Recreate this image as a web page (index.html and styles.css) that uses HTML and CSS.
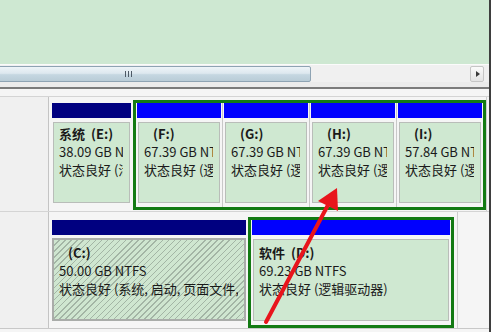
FILE: index.html
```html
<!DOCTYPE html>
<html lang="zh-CN">
<head>
	<meta charset="UTF-8">
	<title>磁盘管理</title>
	<link rel="stylesheet" href="styles.css">
</head>
<body>
	<div class="win">
		<div class="main">
			<div class="top"></div>
			<div class="hscroll">
				<div class="track">
					<div class="thumb"><i class="grip"></i></div>
				</div>
				<div class="btn"></div>
			</div>
			<div class="sep"></div>
			<div class="disks">
				<!-- 磁盘 1 -->
				<div class="row row1">
					<div class="label"></div>
					<div class="panel">
						<div class="part navy e">
							<div class="hd"></div>
							<div class="bd">
								<p class="name">系统<span>(E:)</span></p>
								<p>38.09 GB NTFS</p>
								<p>状态良好 (活动, 主分区)</p>
							</div>
						</div>
						<div class="frame">
							<div class="part blue">
								<div class="hd"></div>
								<div class="bd">
									<p class="name"><span class="solo">(F:)</span></p>
									<p>67.39 GB NTFS</p>
									<p>状态良好 (逻辑驱动器)</p>
								</div>
							</div>
							<div class="part blue">
								<div class="hd"></div>
								<div class="bd">
									<p class="name"><span class="solo">(G:)</span></p>
									<p>67.39 GB NTFS</p>
									<p>状态良好 (逻辑驱动器)</p>
								</div>
							</div>
							<div class="part blue">
								<div class="hd"></div>
								<div class="bd">
									<p class="name"><span class="solo">(H:)</span></p>
									<p>67.39 GB NTFS</p>
									<p>状态良好 (逻辑驱动器)</p>
								</div>
							</div>
							<div class="part blue">
								<div class="hd"></div>
								<div class="bd">
									<p class="name"><span class="solo">(I:)</span></p>
									<p>57.84 GB NTFS</p>
									<p>状态良好 (逻辑驱动器)</p>
								</div>
							</div>
						</div>
					</div>
				</div>
				<!-- 磁盘 0 -->
				<div class="row row2">
					<div class="label"></div>
					<div class="panel">
						<div class="part navy c">
							<div class="hd"></div>
							<div class="bd hatch">
								<p class="name"><span class="solo">(C:)</span></p>
								<p>50.00 GB NTFS</p>
								<p>状态良好 (系统, 启动, 页面文件, 活动, 故障转储, 主分区)</p>
							</div>
						</div>
						<div class="frame">
							<div class="part blue">
								<div class="hd"></div>
								<div class="bd">
									<p class="name">软件<span>(D:)</span></p>
									<p>69.23 GB NTFS</p>
									<p>状态良好 (逻辑驱动器)</p>
								</div>
							</div>
						</div>
					</div>
				</div>
			</div>
		</div>
		<div class="edge"></div>
	</div>
	<svg class="mark" width="494" height="332" viewBox="0 0 494 332">
		<line x1="266" y1="322" x2="328" y2="205" stroke="#e8151c" stroke-width="4" stroke-linecap="round"/>
		<polygon points="337,188 318,201 338,211" fill="#e8151c"/>
	</svg>
</body>
</html>
```

FILE: styles.css
```css
*{
	margin: 0;
	padding: 0;
	box-sizing: border-box;
}
body{
	position: relative;
	width: 494px;
	height: 332px;
	overflow: hidden;
	background: #fff;
	font-family: "Noto Sans CJK SC", "Noto Sans", sans-serif;
	font-size: 13px;
	color: #1a1a1a;
}
.win{
	display: flex;
	height: 332px;
}
.main{
	display: flex;
	flex-direction: column;
	width: 489px;
	flex-shrink: 0;
}
.edge{
	width: 2px;
	background: #3e3e3e;
}
.top{
	height: 64px;
	background: #cee8d2;
}

/* 滚动条 */
.hscroll{
	display: flex;
	align-items: center;
	height: 18px;
	padding-right: 5px;
	background: #f0f0f0;
	border-top: 1px solid #fbfbfb;
	overflow: hidden;
}
.track{
	flex: 1;
	height: 16px;
}
.thumb{
	display: flex;
	align-items: center;
	justify-content: center;
	margin-left: -54px;
	width: 365px;
	height: 16px;
	border: 1px solid #8ea3b3;
	border-radius: 2px;
	background: linear-gradient(#eef4f8, #dde8ef 45%, #c5d7e1 55%, #b9ccd7);
}
.grip{
	width: 7px;
	height: 6px;
	background: repeating-linear-gradient(90deg, #4e5a66 0 1px, transparent 1px 3px);
}
.btn{
	position: relative;
	width: 14px;
	height: 16px;
	border: 1px solid #c6c6c6;
	border-radius: 2px;
	background: linear-gradient(#fbfbfb, #e4e4e4);
}
.btn::after{
	content: "";
	position: absolute;
	left: 5px;
	top: 4px;
	border-left: 4px solid #3a3a3a;
	border-top: 3.5px solid transparent;
	border-bottom: 3.5px solid transparent;
}
.sep{
	height: 7px;
	background: #ebebeb;
	border-bottom: 2px solid #7b7b7b;
}

/* 磁盘 */
.disks{
	flex: 1;
	padding-top: 7px;
	background: #f5f5f5;
}
.row{
	display: flex;
	border-top: 1px solid #d4d4d4;
}
.row1{
	height: 115px;
}
.row2{
	height: 118px;
	border-bottom: 1px solid #c8c8c8;
}
.label{
	width: 49px;
	flex-shrink: 0;
	background: #f0f0f0;
	border-right: 1px solid #c4c4c4;
}
.panel{
	display: flex;
	flex-shrink: 0;
	padding: 3px 0 1px 2px;
	border-right: 1px solid #cdcdcd;
}
.row1 .panel{
	width: 438px;
}
.row2 .panel{
	width: 409px;
	padding: 5px 3px 0 2px;
}
.part{
	display: flex;
	flex-direction: column;
	min-width: 0;
}
.panel > .part{
	flex-shrink: 0;
	margin: 3px 1px 3px 0;
}
.e{
	width: 81px;
}
.c{
	width: 196px;
}
.frame{
	flex: 1 1 0;
	min-width: 0;
	display: flex;
	border: 3px solid #137a13;
}
.frame .part{
	flex: 1 1 0;
}
.frame .part + .part{
	border-left: 1px solid #c8c8c8;
}
.hd{
	height: 15px;
	margin: 0 1px;
}
.navy .hd{
	background: #000080;
}
.blue .hd{
	background: #0000fe;
}
.bd{
	flex: 1;
	min-width: 0;
	margin: 4px 2px;
	padding: 2px 6px 0 5px;
	border: 1px solid #b9bdb9;
	background: #cfe8d1;
}
.row2 .bd{
	padding-top: 4px;
}
.bd p{
	overflow: hidden;
	white-space: nowrap;
	line-height: 18px;
}
.name{
	font-weight: bold;
}
.name span{
	margin-left: 6px;
}
.name .solo{
	margin-left: 9px;
}
.hatch{
	margin: 3px 1px 4px;
	border: 2px solid #a9aca9;
	background: repeating-linear-gradient(135deg, #cfe6d0 0 3.3px, #a3b5a5 3.3px 4.3px);
}

/* 红色箭头 */
.mark{
	position: absolute;
	left: 0;
	top: 0;
	pointer-events: none;
}
```
